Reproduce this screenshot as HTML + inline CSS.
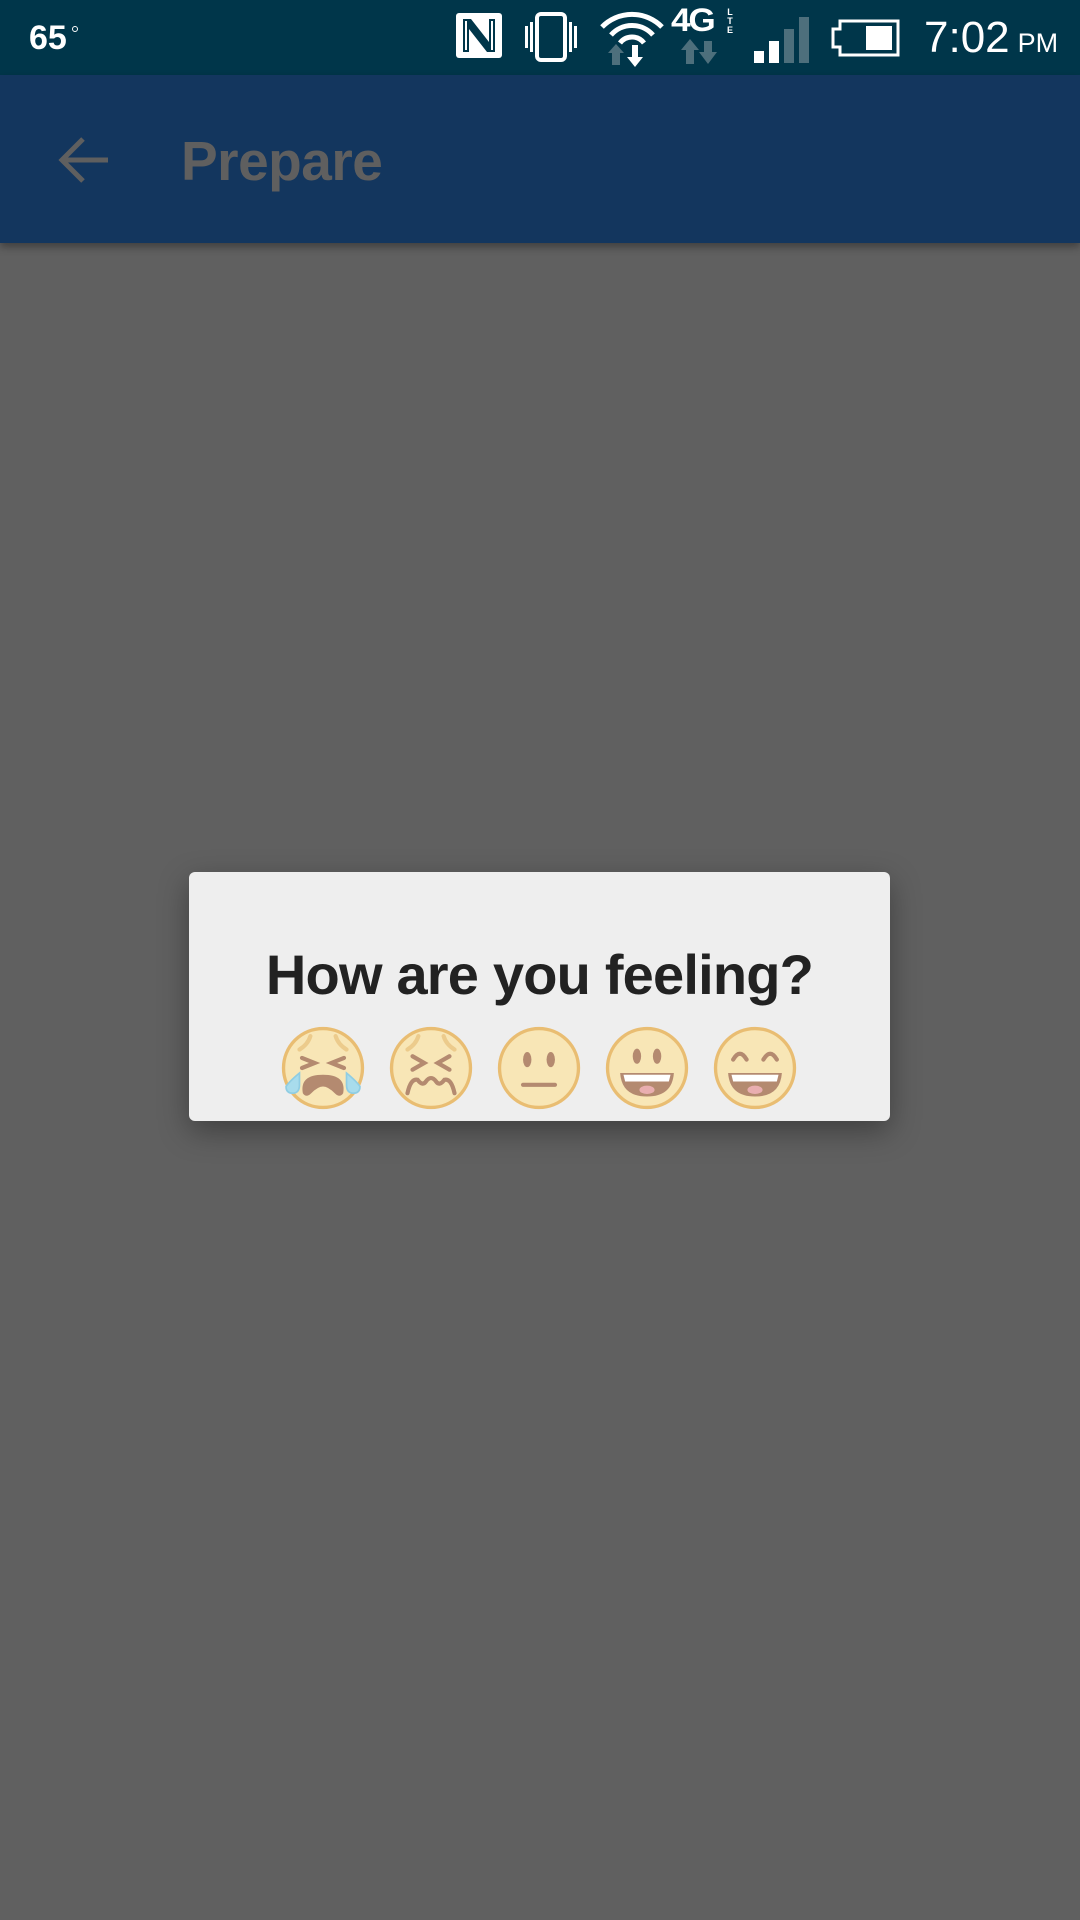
<!DOCTYPE html>
<html><head><meta charset="utf-8"><style>
*{margin:0;padding:0;box-sizing:border-box}
body{width:1080px;height:1920px;background:#606060;position:relative;overflow:hidden;font-family:"Liberation Sans",sans-serif}
.sb{position:absolute;left:0;top:0;width:1080px;height:75px;background:#00364a}
.tb{position:absolute;left:0;top:75px;width:1080px;height:168px;background:#13365e;box-shadow:0 4px 8px rgba(0,0,0,.35)}
.abs{position:absolute}
.dlg{position:absolute;left:189px;top:872px;width:701px;height:249px;background:#eeeeee;border-radius:6px;box-shadow:0 10px 30px rgba(0,0,0,.35)}
.title{position:absolute;left:0;width:701px;top:68px;text-align:center;font-size:56px;color:#222;font-weight:bold;letter-spacing:-0.8px;line-height:70px}
.emo{position:absolute;top:154px;width:84px;height:84px}
</style></head><body>
<div class="sb">
  <div class="abs" style="left:29px;top:18px;font-size:34px;font-weight:bold;color:#fff;line-height:40px">65</div>
  <div class="abs" style="left:72px;top:26px;width:6px;height:6px;border:1.5px solid #fff;border-radius:50%"></div>
  <svg class="abs" style="left:456px;top:13px" width="46" height="45" viewBox="0 0 46 45">
    <rect x="0" y="0" width="46" height="45" rx="3" fill="#fff"/>
    <path d="M7 6 V39 H13 V16 L31 39 H39 V6 H33 V29 L15 6 Z" fill="#00364a"/>
    <path d="M10 8 V37 M36 8 V37" stroke="#fff" stroke-width="2"/>
  </svg>
  <svg class="abs" style="left:522px;top:12px" width="58" height="50" viewBox="0 0 58 50">
    <rect x="15" y="2" width="28" height="46" rx="4" fill="none" stroke="#fff" stroke-width="4"/>
    <rect x="3" y="14" width="3" height="22" fill="#fff"/><rect x="8" y="10" width="3" height="30" fill="#fff"/>
    <rect x="47" y="10" width="3" height="30" fill="#fff"/><rect x="52" y="14" width="3" height="22" fill="#fff"/>
  </svg>
  <svg class="abs" style="left:598px;top:7px" width="68" height="62" viewBox="0 0 68 62">
    <path d="M4 20 A42 42 0 0 1 64 20" fill="none" stroke="#fff" stroke-width="5"/>
    <path d="M13 28 A28 28 0 0 1 55 28" fill="none" stroke="#fff" stroke-width="5"/>
    <path d="M22 36 A15 15 0 0 1 46 36" fill="none" stroke="#fff" stroke-width="5"/>
    <path d="M14 58 V46 H10 L18 37 L26 46 H22 V58 Z" fill="#4d6f7c"/>
    <path d="M34 38 H40 V50 H45 L37 60 L29 50 H34 Z" fill="#fff"/>
  </svg>
  <div class="abs" style="left:671px;top:2px;font-size:32px;font-weight:bold;color:#fff;letter-spacing:-2px;transform:scaleX(1.1);transform-origin:left">4G</div>
  <div class="abs" style="left:725px;top:8px;width:10px;font-size:9px;line-height:9px;color:#fff;font-weight:bold;text-align:center">L<br>T<br>E</div>
  <svg class="abs" style="left:680px;top:36px" width="50" height="30" viewBox="0 0 50 30">
    <path d="M6 28 V14 H1 L10 3 L19 14 H14 V28 Z" fill="#4d6f7c"/>
    <path d="M24 5 H32 V16 H37 L28 28 L19 16 H24 Z" fill="#4d6f7c"/>
  </svg>
  <svg class="abs" style="left:754px;top:17px" width="58" height="46" viewBox="0 0 58 46">
    <rect x="0" y="34" width="10" height="12" fill="#fff"/>
    <rect x="15" y="24" width="10" height="22" fill="#fff"/>
    <rect x="30" y="12" width="10" height="34" fill="#4d6f7c"/>
    <rect x="45" y="0" width="10" height="46" fill="#4d6f7c"/>
  </svg>
  <svg class="abs" style="left:830px;top:19px" width="70" height="38" viewBox="0 0 70 38">
    <path d="M10 2 H68 V36 H10 V28 H3 V10 H10 Z" fill="none" stroke="#fff" stroke-width="3"/>
    <rect x="36" y="7" width="26" height="24" fill="#fff"/>
  </svg>
  <div class="abs" style="left:924px;top:14px;font-size:44px;color:#fff;line-height:48px">7:02<span style="font-size:27px;margin-left:8px">PM</span></div>
</div>
<div class="tb">
  <svg class="abs" style="left:58px;top:60px" width="52" height="50" viewBox="0 0 52 50">
    <path d="M50 25 H6 M25 4 L4 25 L25 46" fill="none" stroke="#5f5f5f" stroke-width="5"/>
  </svg>
  <div class="abs" style="left:181px;top:53px;font-size:55px;color:#5f5f5f;font-weight:bold;line-height:66px;letter-spacing:-0.5px">Prepare</div>
</div>
<div class="dlg">
  <div class="title">How are you feeling?</div>
  <svg class="emo" style="left:92px" viewBox="0 0 100 100">
    <circle cx="50" cy="50" r="47" fill="#f8e6b6" stroke="#e9bd72" stroke-width="4"/>
    <path d="M22 28 Q32 22 35 12 M78 28 Q68 22 65 12" fill="none" stroke="#eccb8c" stroke-width="5" stroke-linecap="round"/>
    <path d="M25 38 L40 44 L25 50 M75 38 L60 44 L75 50" fill="none" stroke="#b48a70" stroke-width="5" stroke-linecap="round"/>
    <path d="M26 80 Q22 58 50 58 Q78 58 74 80 Q70 86 64 80 Q56 72 50 72 Q44 72 36 80 Q30 86 26 80Z" fill="#b48a70"/>
    <path d="M22 56 Q10 66 6 72 Q6 80 14 80 Q22 80 22 70 Z M78 56 Q90 66 94 72 Q94 80 86 80 Q78 80 78 70 Z" fill="#a8dcec" stroke="#8fcde3" stroke-width="2"/>
  </svg>
  <svg class="emo" style="left:200px" viewBox="0 0 100 100">
    <circle cx="50" cy="50" r="47" fill="#f8e6b6" stroke="#e9bd72" stroke-width="4"/>
    <path d="M22 28 Q32 22 35 12 M78 28 Q68 22 65 12" fill="none" stroke="#eccb8c" stroke-width="5" stroke-linecap="round"/>
    <path d="M28 36 L42 44 L28 52 M72 36 L58 44 L72 52" fill="none" stroke="#b48a70" stroke-width="5" stroke-linecap="round"/>
    <path d="M22 80 Q26 62 34 64 Q40 72 44 66 Q50 58 56 66 Q60 72 66 64 Q74 62 78 80" fill="none" stroke="#b48a70" stroke-width="5" stroke-linecap="round"/>
  </svg>
  <svg class="emo" style="left:308px" viewBox="0 0 100 100">
    <circle cx="50" cy="50" r="47" fill="#f8e6b6" stroke="#e9bd72" stroke-width="4"/>
    <ellipse cx="36" cy="40" rx="5" ry="9" fill="#b48a70"/><ellipse cx="64" cy="40" rx="5" ry="9" fill="#b48a70"/>
    <path d="M31 70 H69" stroke="#b48a70" stroke-width="5" stroke-linecap="round"/>
  </svg>
  <svg class="emo" style="left:416px" viewBox="0 0 100 100">
    <circle cx="50" cy="50" r="47" fill="#f8e6b6" stroke="#e9bd72" stroke-width="4"/>
    <ellipse cx="38" cy="36" rx="5" ry="9" fill="#b48a70"/><ellipse cx="62" cy="36" rx="5" ry="9" fill="#b48a70"/>
    <path d="M18 56 H82 Q80 84 50 84 Q20 84 18 56Z" fill="#b48a70"/>
    <path d="M22 58 H78 L76 66 H24Z" fill="#fff"/>
    <ellipse cx="50" cy="76" rx="9" ry="5" fill="#e9aeb0"/>
  </svg>
  <svg class="emo" style="left:524px" viewBox="0 0 100 100">
    <circle cx="50" cy="50" r="47" fill="#f8e6b6" stroke="#e9bd72" stroke-width="4"/>
    <path d="M24 40 Q32 26 40 40 M60 40 Q68 26 76 40" fill="none" stroke="#b48a70" stroke-width="5" stroke-linecap="round"/>
    <path d="M18 56 H82 Q80 84 50 84 Q20 84 18 56Z" fill="#b48a70"/>
    <path d="M22 58 H78 L76 66 H24Z" fill="#fff"/>
    <ellipse cx="50" cy="76" rx="9" ry="5" fill="#e9aeb0"/>
  </svg>
</div>
</body></html>
